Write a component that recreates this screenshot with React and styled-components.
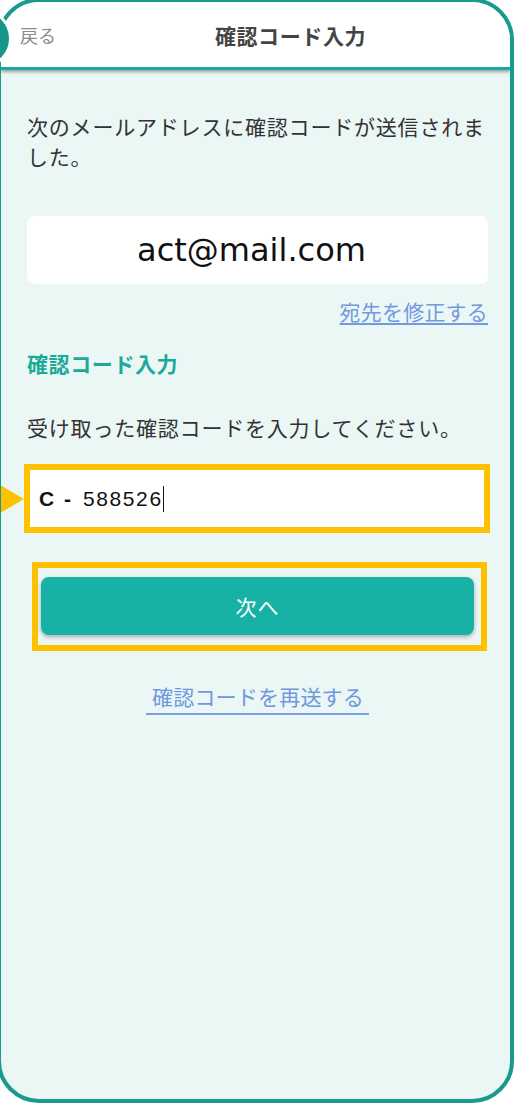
import React from "react";
import styled, { createGlobalStyle } from "styled-components";

const Global = createGlobalStyle`
  html, body { margin: 0; padding: 0; background: #ffffff; }
  body { font-family: "Noto Sans CJK JP", "Noto Sans", sans-serif; }
  * { box-sizing: border-box; }
`;

const Page = styled.div`
  position: relative;
  width: 514px;
  height: 1103px;
  overflow: hidden;
  background: #ffffff;
`;

const Frame = styled.div`
  width: 517px;
  height: 1105px;
  margin: -2px 0 0 -3px;
  border: 4px solid #1a9a8f;
  border-radius: 42px;
  overflow: hidden;
  background: #eaf7f5;
  display: flex;
  flex-direction: column;
`;

const Badge = styled.div`
  position: absolute;
  z-index: 3;
  left: -47px;
  top: 9px;
  width: 59px;
  height: 59px;
  border-radius: 50%;
  background: #17978c;
  border: 3px solid #ffffff;
`;

const Header = styled.header`
  height: 68px;
  flex: none;
  display: flex;
  align-items: center;
  background: #ffffff;
  border-bottom: 3px solid #1aa89c;
  box-shadow: 0 2px 3px rgba(0, 0, 0, 0.35);
  position: relative;
  z-index: 1;
`;

const Back = styled.span`
  width: 70px;
  padding-left: 19px;
  font-size: 18px;
  color: #8a8a8a;
  flex: none;
`;

const Title = styled.h1`
  flex: 1;
  margin: 0;
  text-align: center;
  font-size: 21px;
  font-weight: 700;
  color: #444444;
  letter-spacing: 0.6px;
`;

const Body = styled.main`
  display: flex;
  flex-direction: column;
  padding: 0 22px 0 26px;
`;

const Text = styled.p`
  margin: ${(p) => p.$mt || 0}px 0 0;
  font-size: 21px;
  line-height: 30px;
  letter-spacing: 0.8px;
  color: #333333;
`;

const EmailBox = styled.div`
  margin-top: 45px;
  height: 68px;
  background: #ffffff;
  border-radius: 7px;
  display: flex;
  align-items: center;
  justify-content: center;
  padding-right: 12px;
  font-family: "DejaVu Sans", "Noto Sans", sans-serif;
  font-size: 32px;
  color: #111111;
`;

const LinkRow = styled.div`
  display: flex;
  justify-content: ${(p) => p.$align || "flex-end"};
  margin-top: ${(p) => p.$mt || 0}px;
`;

const TextLink = styled.a`
  font-size: 21px;
  line-height: 30px;
  color: #7399e0;
  text-decoration: underline;
  text-underline-offset: 3px;
  letter-spacing: 0.2px;
`;

const ResendLink = styled.a`
  display: inline-block;
  padding: 0 5px 2px 6px;
  font-size: 21px;
  line-height: 30px;
  color: #6f96df;
  border-bottom: 2px solid #7aa0e4;
  letter-spacing: 0.2px;
`;

const Heading = styled.h2`
  margin: 22px 0 0;
  font-size: 21px;
  line-height: 30px;
  font-weight: 700;
  color: #1ba99a;
  letter-spacing: 0.6px;
`;

const Highlight = styled.div`
  position: relative;
  border: 6px solid #ffc000;
  margin: ${(p) => p.$m};
`;

const Pointer = styled.span`
  position: absolute;
  left: -50px;
  top: 50%;
  transform: translateY(-50%);
  width: 0;
  height: 0;
  border-top: 26px solid transparent;
  border-bottom: 26px solid transparent;
  border-left: 44px solid #ffc000;
`;

const CodeField = styled.div`
  height: 57px;
  background: #ffffff;
  display: flex;
  align-items: center;
  padding-left: 9px;
  font-family: "Liberation Sans", Arial, sans-serif;
  font-size: 21px;
  color: #111111;
`;

const Prefix = styled.span`
  font-weight: 700;
  margin-right: 10px;
  letter-spacing: 2px;
`;

const Code = styled.span`
  letter-spacing: 1.6px;
`;

const Caret = styled.span`
  display: inline-block;
  width: 1.5px;
  height: 26px;
  background: #111111;
`;

const ButtonFrame = styled.div`
  padding: 9px 7px 10px 3px;
`;

const NextButton = styled.button`
  width: 100%;
  height: 58px;
  border: none;
  border-radius: 8px;
  background: #17b1a6;
  color: #ffffff;
  font-family: "Noto Sans CJK JP", sans-serif;
  font-size: 21px;
  font-weight: 400;
  box-shadow: 0 2px 4px rgba(0, 0, 0, 0.3);
  letter-spacing: 1px;
`;

export default function App() {
  return (
    <>
      <Global />
      <Page>
        <Frame>
          <Header>
            <Back>戻る</Back>
            <Title>確認コード入力</Title>
          </Header>
          <Body>
            <Text $mt={41}>次のメールアドレスに確認コードが送信されました。</Text>
            <EmailBox>act@mail.com</EmailBox>
            <LinkRow $mt={12}>
              <TextLink>宛先を修正する</TextLink>
            </LinkRow>
            <Heading>確認コード入力</Heading>
            <Text $mt={34}>受け取った確認コードを入力してください。</Text>
            <Highlight $m="22px -2px 0 -3px">
              <Pointer />
              <CodeField>
                <Prefix>C -</Prefix>
                <Code>588526</Code>
                <Caret />
              </CodeField>
            </Highlight>
            <Highlight $m="29px 1px 0 5px">
              <ButtonFrame>
                <NextButton>次へ</NextButton>
              </ButtonFrame>
            </Highlight>
            <LinkRow $align="center" $mt={30}>
              <ResendLink>確認コードを再送する</ResendLink>
            </LinkRow>
          </Body>
        </Frame>
        <Badge />
      </Page>
    </>
  );
}
